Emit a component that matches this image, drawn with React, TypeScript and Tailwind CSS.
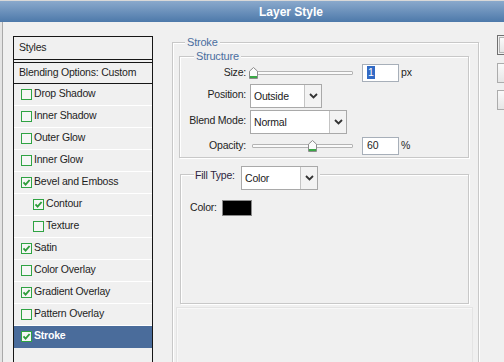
import React from 'react';

interface StyleItem {
  label: string;
  checked: boolean;
  indent?: boolean;
  selected?: boolean;
}

const STYLE_ITEMS: StyleItem[] = [
  { label: 'Drop Shadow', checked: false },
  { label: 'Inner Shadow', checked: false },
  { label: 'Outer Glow', checked: false },
  { label: 'Inner Glow', checked: false },
  { label: 'Bevel and Emboss', checked: true },
  { label: 'Contour', checked: true, indent: true },
  { label: 'Texture', checked: false, indent: true },
  { label: 'Satin', checked: true },
  { label: 'Color Overlay', checked: false },
  { label: 'Gradient Overlay', checked: true },
  { label: 'Pattern Overlay', checked: false },
  { label: 'Stroke', checked: true, selected: true }
];

function CheckBox({ checked }: { checked: boolean }) {
  return (
    <span className="flex h-[11px] w-[11px] flex-none items-center justify-center border border-[#2fa343] bg-[#f6f6f6]">
      {checked && (
        <svg width="9" height="9" viewBox="0 0 9 9">
          <path d="M1.5 4.3 L3.6 6.6 L7.6 2" fill="none" stroke="#2e9d3a" strokeWidth="1.9" />
        </svg>
      )}
    </span>
  );
}

function Chevron() {
  return (
    <svg width="9" height="6" viewBox="0 0 9 6">
      <path d="M1 1 L4.5 4.5 L8 1" fill="none" stroke="#333" strokeWidth="1.8" />
    </svg>
  );
}

function Dropdown({ value, className }: { value: string; className: string }) {
  return (
    <div className={`flex h-[24px] flex-none border border-[#a9a9a9] bg-white ${className}`}>
      <span className="flex flex-1 items-center pl-[3px] pt-[2px] text-[#1a1a1a]">{value}</span>
      <span className="flex w-[17px] items-center justify-center border-l border-[#c4c4c4] bg-[#f3f3f3]">
        <Chevron />
      </span>
    </div>
  );
}

function Slider({ value, max }: { value: number; max: number }) {
  const left = -3 + (value / max) * 98;
  return (
    <div className="relative h-[19px] w-[101px] flex-none">
      <div className="absolute left-0 right-0 top-[8px] h-[4px] rounded-[1px] border border-[#b4b4b4] bg-[#fafafa]" />
      <svg className="absolute top-[4px]" style={{ left }} width="9" height="12" viewBox="0 0 9 12">
        <path d="M0.5 11.5 V4.2 L4.5 0.5 L8.5 4.2 V11.5 Z" fill="#fbfbfb" stroke="#8c8c8c" />
        <rect x="1" y="9" width="7" height="2" fill="#3aa845" />
      </svg>
    </div>
  );
}

function NumberBox({ children }: { children: React.ReactNode }) {
  return (
    <div className="ml-[9px] flex h-[18px] w-[37px] flex-none items-center border border-[#a7afb9] bg-white pl-[4px]">
      {children}
    </div>
  );
}

const etched = 'border border-[#c8c8c8] shadow-[inset_1px_1px_0_#fff,1px_1px_0_#fff]';

export default function App() {
  return (
    <div className="h-[362px] w-[504px] overflow-hidden bg-[#f0f0f0] font-['Liberation_Sans',Arial,sans-serif] text-[10.5px] tracking-[-0.2px] text-[#1e1e1e]">
      <div className="flex h-[22px] items-center justify-center border-t border-[#d8d8d8] bg-gradient-to-b from-[#8aa9cc] to-[#4d79aa] pl-[78px] text-[12px] font-bold tracking-normal text-white">
        Layer Style
      </div>

      <div className="flex h-[340px]">
        <div className="w-[3px] flex-none border-r border-[#a9a9a9] bg-[#e4e4e4]" />

        <div className="ml-[10px] mt-[14px] h-[340px] w-[140px] flex-none border border-[#161616] bg-[#f0f0f0]">
          <div className="flex h-[23px] items-center border-b border-[#161616] pl-[5px]">Styles</div>
          <div className="mt-[2px] flex h-[22px] items-center border-y border-[#161616] pl-[5px]">
            Blending Options: Custom
          </div>
          {STYLE_ITEMS.map(item => (
            <div
              key={item.label}
              className={`flex h-[22px] items-center border-b pb-[1px] ${
                item.selected
                  ? 'border-[#4a6c9b] bg-[#4a6c9b] font-bold text-white'
                  : 'border-white'
              } ${item.indent ? 'pl-[19px]' : 'pl-[7px]'}`}
            >
              <CheckBox checked={item.checked} />
              <span className="ml-[2px]">{item.label}</span>
            </div>
          ))}
        </div>

        <div className={`ml-[19px] mt-[20px] h-[340px] w-[307px] flex-none ${etched}`}>
          <div className="-mt-[8px] ml-[12px] w-fit bg-[#f0f0f0] px-[2px] text-[11px] leading-[14px] text-[#4b6e9f]">Stroke</div>

          <div className={`ml-[6px] mt-[7px] w-[290px] pb-[2px] ${etched}`}>
            <div className="-mt-[8px] ml-[14px] w-fit bg-[#f0f0f0] px-[2px] text-[11px] leading-[14px] text-[#4b6e9f]">
              Structure
            </div>

            <div className="flex h-[19px] items-center">
              <span className="w-[66px] text-right">Size:</span>
              <div className="ml-[6px]"><Slider value={1} max={250} /></div>
              <NumberBox>
                <span className="bg-[#316ac5] px-[1px] leading-[13px] text-white">1</span>
              </NumberBox>
              <span className="ml-[2px]">px</span>
            </div>

            <div className="mt-[2px] flex h-[24px] items-center">
              <span className="w-[66px] pb-[3px] text-right">Position:</span>
              <Dropdown value="Outside" className="ml-[4px] w-[72px]" />
            </div>

            <div className="mt-[2px] flex h-[24px] items-center">
              <span className="w-[66px] pb-[3px] text-right">Blend Mode:</span>
              <Dropdown value="Normal" className="ml-[4px] w-[97px]" />
            </div>

            <div className="mt-[2px] flex h-[19px] items-center">
              <span className="w-[66px] text-right">Opacity:</span>
              <div className="ml-[6px]"><Slider value={60} max={100} /></div>
              <NumberBox>
                <span>60</span>
              </NumberBox>
              <span className="ml-[2px]">%</span>
            </div>
          </div>

          <div className={`ml-[7px] mt-[16px] h-[130px] w-[289px] ${etched}`}>
            <div className="-mt-[9px] ml-[13px] flex w-fit items-start bg-[#f0f0f0] pl-[1px] pr-[2px]">
              <span className="mt-[2px] w-[45px] leading-[14px] text-[#2b2440]">Fill Type:</span>
              <Dropdown value="Color" className="ml-[1px] h-[23px] w-[77px]" />
            </div>
            <div className="mt-[10px] flex h-[16px] items-center pl-[9px]">
              <span className="w-[32px]">Color:</span>
              <span className="h-[16px] w-[30px] border border-[#8a8a8a] bg-black" />
            </div>
          </div>

          <div className="ml-[3px] mt-[3px] h-[80px] w-[297px] border border-[#e4e4e4] shadow-[inset_1px_1px_0_#f8f8f8]" />
        </div>

        <div className="ml-[18px] mt-[13px] flex w-[80px] flex-none flex-col">
          <div className="h-[20px] border border-[#707070] p-[1px]">
            <div className="h-full border border-[#b4b4b4] bg-gradient-to-b from-[#fafafa] to-[#e6e6e6]" />
          </div>
          <div className="mt-[8px] h-[20px] border border-[#acacac] bg-gradient-to-b from-[#fafafa] to-[#e6e6e6]" />
          <div className="mt-[7px] h-[20px] border border-[#acacac] bg-gradient-to-b from-[#fafafa] to-[#e6e6e6]" />
        </div>
      </div>
    </div>
  );
}
